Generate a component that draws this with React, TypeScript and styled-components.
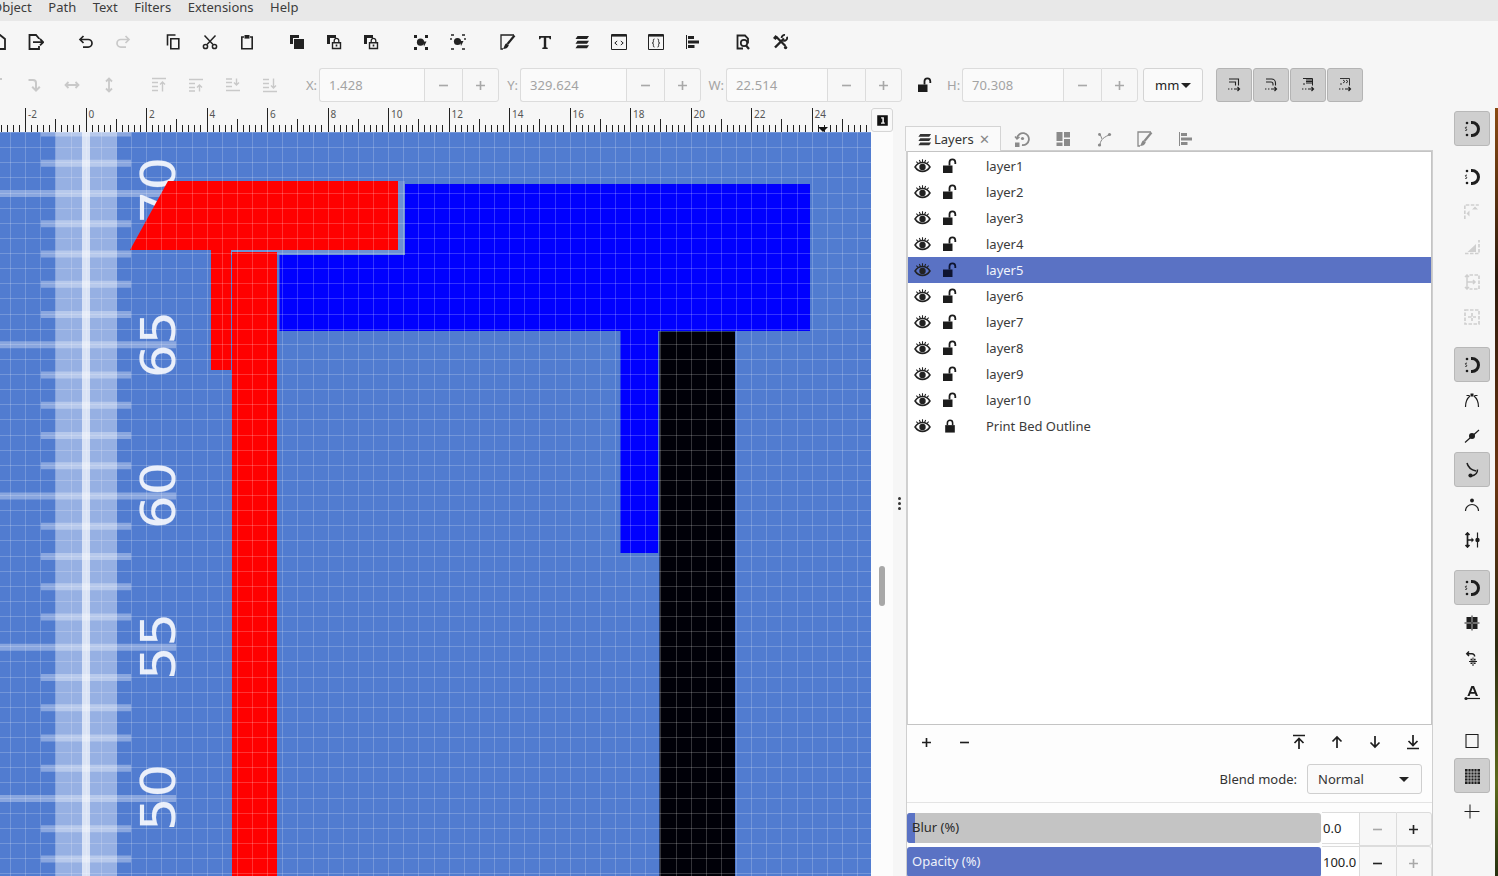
import React from "react";
import styled, { createGlobalStyle } from "styled-components";

const GlobalStyle = createGlobalStyle`
  html, body {
    margin: 0;
    padding: 0;
    background: #f6f6f6;
    overflow: hidden;
  }
  * {
    box-sizing: border-box;
  }
`;

const Page = styled.div`
  display: flex;
  flex-direction: column;
  width: 1498px;
  height: 876px;
  overflow: hidden;
  background: #f6f6f6;
  color: #3a3a3a;
  font-family: "Noto Sans", "Open Sans", sans-serif;
  font-size: 13px;
`;

const MenuBar = styled.div`
  display: flex;
  flex: none;
  gap: 16.5px;
  height: 21px;
  margin-left: -8px;
  background: #e8e8e8;
  line-height: 15px;
`;

const MenuItem = styled.span`
  color: #3c3c3c;
`;

const CommandBar = styled.div`
  display: flex;
  flex: none;
  align-items: center;
  gap: 13px;
  height: 43px;
  margin-left: -20px;
  padding-bottom: 1px;
`;

const ControlsBar = styled.div`
  display: flex;
  flex: none;
  align-items: flex-start;
  height: 44px;
  margin-left: -21px;
  padding-top: 4px;
`;

const ToolGroup = styled.div`
  display: flex;
  align-items: center;
  height: 34px;
  margin-right: ${(p: { $gap?: number }) => p.$gap ?? 13}px;
`;

const CmdGroup = styled.div`
  display: flex;
  align-items: center;
`;

const ToolBtn = styled.div<{ $muted?: boolean }>`
  display: flex;
  flex: none;
  align-items: center;
  justify-content: center;
  width: 37px;
  height: 34px;
  color: ${(p) => (p.$muted ? "#c9c9c9" : "#222")};
`;

const Svg = styled.svg<{ $size?: number }>`
  display: block;
  flex: none;
  width: ${(p) => p.$size ?? 16}px;
  height: ${(p) => p.$size ?? 16}px;
`;

const Field = styled.div`
  display: flex;
  flex: none;
  align-items: center;
  height: 34px;
`;

const FieldLabel = styled.span<{ $w: number }>`
  width: ${(p) => p.$w}px;
  padding-right: 2px;
  color: #a4a4a4;
  text-align: right;
`;

const ValueBox = styled.div<{ $w: number }>`
  display: flex;
  align-items: center;
  width: ${(p) => p.$w}px;
  height: 34px;
  padding: 0 0 1px 9px;
  background: #fafafa;
  border: 1px solid #dcdcdc;
  border-right: 0;
  border-radius: 3px 0 0 3px;
  color: #a3a3a3;
  letter-spacing: 0.1px;
`;

const StepBtn = styled.div<{ $last?: boolean; $muted?: boolean; $w?: number }>`
  display: flex;
  align-items: center;
  justify-content: center;
  width: ${(p) => p.$w ?? 38}px;
  height: 34px;
  background: #f7f7f7;
  border: 1px solid #dcdcdc;
  border-radius: ${(p) => (p.$last ? "0 3px 3px 0" : "0")};
  border-right-width: ${(p) => (p.$last ? 1 : 0)}px;
  color: ${(p) => (p.$muted ? "#a8a8a8" : "#222")};
`;

const LockSlot = styled.div`
  display: flex;
  flex: none;
  align-items: center;
  justify-content: center;
  width: 45px;
  height: 34px;
  color: #1c1c1c;
`;

const UnitSelect = styled.div`
  display: flex;
  flex: none;
  align-items: center;
  justify-content: space-between;
  width: 60px;
  height: 34px;
  margin-left: 5px;
  margin-right: 13px;
  padding: 0 11px;
  background: #fafafa;
  border: 1px solid #d4d4d4;
  border-radius: 3px;
  color: #222;
`;

const Caret = styled.span`
  width: 0;
  height: 0;
  border-left: 5px solid transparent;
  border-right: 5px solid transparent;
  border-top: 5px solid #222;
`;

const ToggleBtn = styled.div`
  display: flex;
  flex: none;
  align-items: center;
  justify-content: center;
  width: 36px;
  height: 34px;
  margin-right: 1px;
  background: #cfcfcf;
  border: 1px solid #b4b4b4;
  border-radius: 3px;
  color: #222;
`;

const Main = styled.div`
  display: flex;
  flex: 1;
  min-height: 0;
`;

const CanvasColumn = styled.div`
  display: flex;
  flex: none;
  flex-direction: column;
  width: 871px;
`;

const RulerSvg = styled.svg`
  display: block;
  flex: none;
  width: 871px;
  height: 24px;
  font-family: "Noto Sans", sans-serif;
  font-size: 10px;
`;

const CanvasSvg = styled.svg`
  display: block;
  width: 871px;
  height: 744px;
  background: #517cd0;
`;

const Gutter = styled.div`
  display: flex;
  flex: none;
  flex-direction: column;
  width: 22px;
  background: #fcfcfc;
`;

const CornerBtn = styled.div`
  display: flex;
  flex: none;
  align-items: center;
  justify-content: center;
  height: 24px;
  background: #f8f8f8;
  border: 1px solid #d6d6d6;
  border-radius: 3px;
  color: #111;
`;

const ScrollThumb = styled.div`
  flex: none;
  width: 6px;
  height: 40px;
  margin: 434px 0 0 8px;
  background: #a8a8a8;
  border-radius: 3px;
`;

const Handle = styled.div`
  display: flex;
  flex: none;
  flex-direction: column;
  align-items: center;
  justify-content: center;
  gap: 2px;
  width: 12px;
  padding-top: 22px;
`;

const HandleDot = styled.span`
  width: 3px;
  height: 3px;
  background: #333;
  border-radius: 50%;
`;

const Dock = styled.div`
  display: flex;
  flex: none;
  flex-direction: column;
  width: 528px;
  padding-top: 18px;
`;

const TabStrip = styled.div`
  display: flex;
  flex: none;
  height: 25px;
  margin-bottom: -1px;
`;

const ActiveTab = styled.div`
  position: relative;
  z-index: 1;
  display: flex;
  align-items: center;
  gap: 2px;
  width: 96px;
  padding-left: 11px;
  background: #fafafa;
  border: 1px solid #d4d4d4;
  border-bottom: 0;
  color: #333;
`;

const TabClose = styled.span`
  margin-left: 3px;
  color: #888;
`;

const Tab = styled.div`
  display: flex;
  flex: none;
  align-items: center;
  justify-content: center;
  width: 41px;
  color: #8a8a8a;
`;

const DockBody = styled.div`
  display: flex;
  flex: 1;
  flex-direction: column;
  min-height: 0;
  margin-left: 1px;
  background: #fdfdfd;
  border-left: 1px solid #cfcfcf;
  border-top: 1px solid #cfcfcf;
  border-right: 1px solid #cfcfcf;
`;

const LayerList = styled.div`
  flex: none;
  height: 574px;
  padding-top: 1px;
  background: #fff;
  border: 1px solid #c4c4c4;
  border-left-color: #d0d0d0;
`;

const LayerRow = styled.div<{ $selected?: boolean }>`
  display: flex;
  align-items: center;
  height: 26px;
  background: ${(p) => (p.$selected ? "#5a72c4" : "transparent")};
  color: ${(p) => (p.$selected ? "#f2f4fb" : "#3b3b3b")};
`;

const EyeSlot = styled.div`
  display: flex;
  justify-content: center;
  width: 28px;
  color: #222;
`;

const RowLock = styled.div<{ $selected?: boolean }>`
  display: flex;
  justify-content: center;
  width: 28px;
  color: ${(p) => (p.$selected ? "#0e1430" : "#1c1c1c")};
`;

const LayerName = styled.span`
  margin-left: 22px;
`;

const ActionRow = styled.div`
  display: flex;
  flex: none;
  justify-content: space-between;
  height: 34px;
`;

const ActionGroup = styled.div`
  display: flex;
`;

const ActionBtn = styled.div`
  display: flex;
  align-items: center;
  justify-content: center;
  width: 38px;
  height: 34px;
  color: #1e1e1e;
`;

const BlendRow = styled.div`
  display: flex;
  flex: none;
  align-items: center;
  justify-content: flex-end;
  gap: 10px;
  height: 30px;
  margin-top: 5px;
  padding-right: 10px;
  color: #333;
`;

const BlendSelect = styled.div`
  display: flex;
  align-items: center;
  justify-content: space-between;
  width: 115px;
  height: 30px;
  padding: 0 12px 0 10px;
  background: #fafafa;
  border: 1px solid #cfcfcf;
  border-radius: 3px;
  color: #333;
`;

const Separator = styled.div`
  flex: none;
  height: 1px;
  margin-top: 8px;
  background: #e4e4e4;
`;

const SliderRow = styled.div<{ $top: number }>`
  display: flex;
  flex: none;
  height: 32px;
  margin-top: ${(p) => p.$top}px;
`;

const SliderBar = styled.div`
  position: relative;
  flex: none;
  width: 414px;
  height: 30px;
  margin-top: 1px;
  overflow: hidden;
  background: #c4c4c4;
  border-radius: 3px;
`;

const SliderFill = styled.div<{ $pct: number }>`
  width: ${(p) => p.$pct}%;
  height: 100%;
  background: #5a72c4;
`;

const SliderLabel = styled.span<{ $light?: boolean }>`
  position: absolute;
  top: 5px;
  left: 5px;
  color: ${(p) => (p.$light ? "#eef1fa" : "#2a2a2a")};
`;

const SpinValue = styled.div`
  display: flex;
  flex: none;
  align-items: center;
  width: 37px;
  height: 32px;
  margin-left: 1px;
  padding: 0 0 1px 1px;
  background: #fff;
  border: 1px solid #dcdcdc;
  border-left: 0;
  border-right: 0;
  color: #222;
`;

const SnapBar = styled.div`
  display: flex;
  flex: none;
  flex-direction: column;
  gap: 13px;
  width: 62px;
  padding: 3px 0 0 21px;
`;

const SnapGroup = styled.div`
  display: flex;
  flex-direction: column;
`;

const SnapBtn = styled.div<{ $active?: boolean; $muted?: boolean }>`
  display: flex;
  align-items: center;
  justify-content: center;
  width: 36px;
  height: 35px;
  background: ${(p) => (p.$active ? "#cfcfcf" : "transparent")};
  border: 1px solid ${(p) => (p.$active ? "#b8b8b8" : "transparent")};
  border-radius: 3px;
  color: ${(p) => (p.$muted ? "#cfcfcf" : "#1e1e1e")};
`;

const Wallpaper = styled.div`
  flex: none;
  width: 3px;
  background: linear-gradient(180deg, #8a4a12 0%, #2c1a0c 22%, #6b3410 48%, #2d2a10 70%, #5d6a1c 88%, #26300f 100%);
`;

const F = ({ d }: { d: string }) => <path d={d} fill="currentColor" stroke="none" />;
const Dot = ({ x, y, r = 1.3 }: { x: number; y: number; r?: number }) => (
  <circle cx={x} cy={y} r={r} fill="currentColor" stroke="none" />
);

const stackBack = <F d="M1 1h9v3H4v6H1z" />;
const padlock = (
  <>
    <path d="M8.2 8V6.6a2.3 2.3 0 0 1 4.6 0V8" strokeWidth={1.3} />
    <path d="M6.5 8.7h8v5.8h-8z" strokeWidth={1.4} />
    <F d="M9.7 10.5h1.6v2H9.7z" />
  </>
);
const dashedArrow = <path d="M2 12h1.4M5 12h1.4M8 12h5.5M11.5 10l2 2-2 2" strokeWidth={1.2} />;

const icons: Record<string, React.ReactNode> = {
  magnet: (
    <>
      <path d="M7 1.5h1a6.5 6.5 0 0 1 0 13H7" strokeWidth={3} />
      <Dot x={3} y={2} />
      <Dot x={3} y={14} />
      <path d="M3 6.2c-1.7-.6-2.3 1-.9 1.6s.8 2.2-.9 1.6" strokeWidth={0.9} />
    </>
  ),
  open: <path d="M2 15V1h7l5 4v10z" strokeWidth={1.8} />,
  saveAs: (
    <>
      <path d="M11 5V4.5L8 1H1.5v14H11v-3" strokeWidth={1.8} />
      <path d="M5 8.2h10M12 5l3.2 3.2L12 11.4" strokeWidth={1.8} />
    </>
  ),
  undo: <path d="M5.5 2 2 5.5 5.5 9M2.5 5.5h7.7a3.8 3.8 0 0 1 0 7.6H5" strokeWidth={1.7} />,
  redo: <path d="M10.5 2 14 5.5 10.5 9M13.5 5.5H5.8a3.8 3.8 0 0 0 0 7.6H11" strokeWidth={1.7} />,
  copy: <path d="M5.8 4.8h8v10h-8zM2.5 11.5V1h8" strokeWidth={1.6} />,
  cut: (
    <>
      <path d="M5 10.5 13.5 1.5M11 10.5 2.5 1.5" strokeWidth={1.5} />
      <circle cx={3.5} cy={12.5} r={2.1} strokeWidth={1.5} />
      <circle cx={12.5} cy={12.5} r={2.1} strokeWidth={1.5} />
    </>
  ),
  paste: (
    <>
      <path d="M5 3H2.8v11.8h10.4V3H11" strokeWidth={1.6} />
      <F d="M5.5 1h5v3.6h-5z" />
    </>
  ),
  stack: (
    <>
      {stackBack}
      <F d="M5 5h10v10H5z" />
    </>
  ),
  stackLock: (
    <>
      {stackBack}
      {padlock}
    </>
  ),
  group: (
    <>
      <F d="M1 1h3v3H1zM12 1h3v3h-3zM1 13h3v3H1zM12 13h3v3h-3z" />
      <circle cx={7.5} cy={8.2} r={3.6} fill="currentColor" stroke="none" />
      <F d="M10 7.5h3.5L11 12.5z" />
    </>
  ),
  ungroup: (
    <>
      <path d="M1 1h3M12 1h3M1 15h3M12 15h3M1 4v2M15 4v2" strokeWidth={1.4} />
      <circle cx={7.5} cy={7.5} r={3.6} fill="currentColor" stroke="none" />
      <F d="M10 7h3.5L11 12z" />
    </>
  ),
  fillStroke: (
    <>
      <path d="M14 1H1v14h2" strokeWidth={1.3} />
      <path d="M14.5 1.5 7.5 10" strokeWidth={2.2} />
      <F d="M6.3 9.2c-1.8 1-1.8 3.6-3.3 5.8 2.6 0 5-1 5.8-3.8z" />
    </>
  ),
  text: <F d="M2 2h12v3.2h-1.2L12 3.8H9.2v9.4l1.5.5V15H5.3v-1.3l1.5-.5V3.8H4l-.8 1.4H2z" />,
  layers: <F d="M3.5 2H15l-2 3H1.5zM3.5 6.7H15l-2 3H1.5zM3.5 11.2H15l-2 3H1.5z" />,
  xml: (
    <>
      <path d="M.5 .5h15v15H.5z" strokeWidth={1} />
      <F d="M1 1h14v1.6H1z" />
      <path d="M6.2 7 3.8 9l2.4 2M9.8 7l2.4 2-2.4 2" strokeWidth={1} />
    </>
  ),
  css: (
    <>
      <path d="M.5 .5h15v15H.5z" strokeWidth={1} />
      <F d="M1 1h14v1.6H1z" />
      <path d="M6.5 5C5 5 5.4 6.2 5.4 7.4S5 9 4.2 9c.8 0 1.2.4 1.2 1.6S5 13 6.5 13M9.5 5c1.5 0 1.1 1.2 1.1 2.4S11 9 11.8 9c-.8 0-1.2.4-1.2 1.6s.4 2.4-1.1 2.4" strokeWidth={1} />
    </>
  ),
  align: (
    <>
      <path d="M1.5 1v14" strokeWidth={1} />
      <F d="M3 2h6v3H3zM3 6.5h11v3H3zM3 11h6.5v3H3z" />
    </>
  ),
  docProps: (
    <>
      <path d="M8 14.5H2.5V1.5H10l3 3v5" strokeWidth={1.8} />
      <circle cx={9} cy={9} r={3.2} strokeWidth={1.7} />
      <path d="M11 11.5 14 15" strokeWidth={2.2} />
    </>
  ),
  prefs: (
    <>
      <path d="M4 2.5 13.5 12" strokeWidth={2.2} />
      <F d="M1 4 3.5 1 6 3.5 3.5 6z" />
      <path d="M12 4.5 3 13.5" strokeWidth={2.4} />
      <path d="M15 2.8a3 3 0 0 1-3.8 3.8M9.6 4a3 3 0 0 1 3.4-3" strokeWidth={1.8} />
      <circle cx={13.6} cy={13.6} r={1.7} fill="currentColor" stroke="none" />
    </>
  ),
  rotCcw: <path d="M10 2H12" strokeWidth={2} />,
  rotCw: <path d="M1.5 3H6c2 0 3 1 3 3v7.5M5.2 9.8 9 13.6l3.8-3.8" strokeWidth={2} />,
  flipH: <path d="M1.5 8h13M4.5 5l-3 3 3 3M11.5 5l3 3-3 3" strokeWidth={1.8} />,
  flipV: <path d="M8 1.5v13M5 4.5l3-3 3 3M5 11.5l3 3 3-3" strokeWidth={1.8} />,
  raiseTop: <path d="M1 1.5h14M1 5.5h6M1 9.5h6M1 13.5h6M11.5 14.5V5M9 7.5 11.5 5 14 7.5" strokeWidth={1.4} />,
  raise: <path d="M1 2.5h14M1 6.5h6M1 10.5h6M1 14h6M11.5 14.5V8M9 10.5 11.5 8l2.5 2.5" strokeWidth={1.4} />,
  lower: <path d="M1 13.5h14M1 9.5h6M1 5.5h6M1 2h6M11.5 1.5V8M9 5.5 11.5 8 14 5.5" strokeWidth={1.4} />,
  lowerBottom: <path d="M1 14.5h14M1 10.5h6M1 6.5h6M1 2.5h6M11.5 1.5V11M9 8.5 11.5 11 14 8.5" strokeWidth={1.4} />,
  minus: <path d="M2.5 8h11" strokeWidth={2} />,
  plus: <path d="M2.5 8h11M8 2.5v11" strokeWidth={2} />,
  lockOpen: (
    <>
      <F d="M1 7.5h9.5V15H1z" />
      <path d="M7.5 7.5V4.2a2.9 2.9 0 0 1 5.8 0V6" strokeWidth={1.8} />
    </>
  ),
  lockClosed: (
    <>
      <F d="M2.5 7h11v8.5h-11z" />
      <path d="M5 7V4.5a3 3 0 0 1 6 0V7" strokeWidth={1.8} />
    </>
  ),
  eye: (
    <>
      <path d="M1 8.5c3.4-5.6 10.6-5.6 14 0-3.4 5.4-10.6 5.4-14 0z" strokeWidth={1.5} />
      <circle cx={8} cy={8.5} r={3} fill="currentColor" stroke="none" />
      <path d="M2.2 3.5 3.8 5M5 1.8 6 4M8 1.2v2.5M11 1.8 10 4M13.8 3.5 12.2 5" strokeWidth={1} />
    </>
  ),
  toggleA: (
    <>
      <path d="M3 2h9.5v6.5M3 5h6.5v3.5" strokeWidth={1.1} />
      {dashedArrow}
    </>
  ),
  toggleB: (
    <>
      <path d="M3 2h5.5a4 4 0 0 1 4 4v2.5M3 5h5a2 2 0 0 1 2 2v1.5" strokeWidth={1.1} />
      {dashedArrow}
    </>
  ),
  toggleC: (
    <>
      <path d="M3 1.5h9.5v7M6 3h6M6 4.5h6M6 6h6M3 7h2" strokeWidth={1} />
      {dashedArrow}
    </>
  ),
  toggleD: (
    <>
      <path d="M3 1.5h9.5v7M6 3l2 1.5L6 6M9 3l2 1.5L9 6M3 7h2" strokeWidth={0.9} />
      {dashedArrow}
    </>
  ),
  one: <F d="M1.5 1.5h13v13h-13zM6.3 4v1.6h1.5v4.9H6.2V12h4.6v-1.5H9.7V4z" />,
  history: (
    <>
      <path d="M3 7a6 6 0 1 1 5 7" strokeWidth={1.8} />
      <path d="M1 5.5 3 8l2.5-2" strokeWidth={1.4} />
      <Dot x={8.5} y={7.5} r={1.6} />
      <F d="M1 11.5h4.5V16H1z" />
    </>
  ),
  objects: <F d="M1.5 1h6v9h-6zM9 1h6v5.5H9zM1.5 11.5h6V15h-6zM9 8h6v7H9z" />,
  nodes: (
    <>
      <path d="M4 15c0-5 2-8 9-11M6 8 4 3" strokeWidth={1} />
      <Dot x={3.5} y={14} r={1.6} />
      <Dot x={13.5} y={3.5} r={1.6} />
      <Dot x={3.5} y={3.5} r={1.4} />
    </>
  ),
  snapBBox: (
    <>
      <path d="M.8 15V1h14" strokeWidth={1.7} strokeDasharray="3.5 1.5" />
      <F d="M8 5.5l3-3 3 3zM5.5 6.5v6L2.5 9.5z" />
    </>
  ),
  snapEdge: (
    <>
      <path d="M1 14.5h14V1" strokeWidth={1.7} strokeDasharray="3.5 1.5" />
      <F d="M3.5 13 12 5v8z" />
    </>
  ),
  snapMid: (
    <>
      <path d="M5.5 1h9.5v14H5.5" strokeWidth={1.7} strokeDasharray="3.5 1.5" />
      <path d="M3 1v14M1 3l2-2 2 2M1 13l2 2 2-2M3 8h8M9 6l2 2-2 2" strokeWidth={1.5} />
    </>
  ),
  snapCenter: <path d="M1 1h14v14H1zM8 4v8M4 8h8" strokeWidth={1.7} strokeDasharray="3.5 1.5" />,
  snapCusp: (
    <>
      <path d="M1.5 15c0-5 2-9 4.5-11M14.5 15c0-5-2-9-4.5-11M2.5 3.5h3M10.5 3.5h3" strokeWidth={1.2} />
      <F d="M6.5 1.5h3v3h-3z" />
    </>
  ),
  snapPath: (
    <>
      <path d="M1 15.5 15 3" strokeWidth={1.2} />
      <circle cx={8} cy={9} r={3} fill="currentColor" stroke="none" />
    </>
  ),
  snapIntersect: (
    <>
      <path d="M3 1c1 4 4.5 7 9 8" strokeWidth={1.5} />
      <path d="M13.5 7.5c0 3.5-2.5 6-6.5 6.5" strokeWidth={1.5} />
      <circle cx={6.5} cy={13.5} r={2.1} fill="currentColor" stroke="none" />
    </>
  ),
  snapSmooth: (
    <>
      <path d="M1.5 14a6.5 6.5 0 0 1 13 0" strokeWidth={1.2} />
      <Dot x={8} y={3.5} r={1.9} />
    </>
  ),
  snapMidpoint: (
    <>
      <path d="M3.5 1v14M1.5 3l2-2 2 2M1.5 13l2 2 2-2M4 8h5" strokeWidth={1.7} />
      <F d="M7.5 5.5 10 8l-2.5 2.5z" />
      <path d="M13.5 .5v15" strokeWidth={1.2} />
      <Dot x={13.5} y={8} r={2.2} />
    </>
  ),
  snapOthers: (
    <>
      <F d="M2.5 2h4.8v5.3H2.5zM8.7 2h4.8v5.3H8.7zM2.5 8.7h4.8V14H2.5zM8.7 8.7h4.8V14H8.7z" />
      <path d="M8 .5v15M.5 8h15" strokeWidth={1} />
    </>
  ),
  snapRotation: (
    <>
      <path d="M3 3.8h5a2.6 2.6 0 0 1 2.6 2.6M5 1.5 2.8 3.8 5 6" strokeWidth={1.5} />
      <path d="M9 7.5V16M5 11.5h8" strokeWidth={1} />
      <F d="M6.5 8.8h1.6v1.6H6.5zM10 8.8h1.6v1.6H10zM6.5 12.5h1.6v1.6H6.5zM10 12.5h1.6v1.6H10z" />
    </>
  ),
  snapText: (
    <>
      <F d="M7.4 1h2.6l4 10h-2.2l-.8-2.2H6.4L5.6 11H3.4zM7.1 7h3.2L8.7 3z" />
      <path d="M2 13.5h14" strokeWidth={1.2} />
      <Dot x={2} y={13.5} r={1.6} />
    </>
  ),
  page: <path d="M2 1.5h12v13H2z" strokeWidth={1.1} />,
  grid: (
    <>
      <F d="M1 1h15v15H1z" />
      <path d="M4 1v15M7 1v15M10 1v15M13 1v15M1 4h15M1 7h15M1 10h15M1 13h15" stroke="#cfcfcf" strokeWidth={0.8} />
    </>
  ),
  guide: <path d="M.5 8.5h15M6 1.5v14" strokeWidth={1} />,
  moveTop: <path d="M2 1.5h12M8 15V5M3.5 9 8 4.5 12.5 9" strokeWidth={1.7} />,
  moveUp: <path d="M8 14V3M3.5 7.5 8 3l4.5 4.5" strokeWidth={1.7} />,
  moveDown: <path d="M8 2v11M3.5 8.5 8 13l4.5-4.5" strokeWidth={1.7} />,
  moveBottom: <path d="M2 14.5h12M8 1v10M3.5 7 8 11.5 12.5 7" strokeWidth={1.7} />,
};

function Glyph({ name, size }: { name: string; size?: number }) {
  return (
    <Svg $size={size} viewBox="0 0 16 16" fill="none" stroke="currentColor">
      {icons[name]}
    </Svg>
  );
}

const commandGroups = [
  ["open", "saveAs"],
  ["undo", "redo"],
  ["copy", "cut", "paste"],
  ["stack", "stackLock", "stackLock"],
  ["group", "ungroup"],
  ["fillStroke", "text", "layers", "xml", "css", "align"],
  ["docProps", "prefs"],
];

const layerNames = ["layer1", "layer2", "layer3", "layer4", "layer5", "layer6", "layer7", "layer8", "layer9", "layer10"];

const snapGroups: { name: string; active?: boolean; muted?: boolean }[][] = [
  [{ name: "magnet", active: true }],
  [
    { name: "magnet" },
    { name: "snapBBox", muted: true },
    { name: "snapEdge", muted: true },
    { name: "snapMid", muted: true },
    { name: "snapCenter", muted: true },
  ],
  [
    { name: "magnet", active: true },
    { name: "snapCusp" },
    { name: "snapPath" },
    { name: "snapIntersect", active: true },
    { name: "snapSmooth" },
    { name: "snapMidpoint" },
  ],
  [
    { name: "magnet", active: true },
    { name: "snapOthers" },
    { name: "snapRotation" },
    { name: "snapText" },
  ],
  [{ name: "page" }, { name: "grid", active: true }, { name: "guide" }],
];

function SpinField({ label, value, labelW, boxW }: { label: string; value: string; labelW: number; boxW: number }) {
  return (
    <Field>
      <FieldLabel $w={labelW}>{label}</FieldLabel>
      <ValueBox $w={boxW}>{value}</ValueBox>
      <StepBtn $muted>
        <Glyph name="minus" size={13} />
      </StepBtn>
      <StepBtn $last $muted $w={37}>
        <Glyph name="plus" size={13} />
      </StepBtn>
    </Field>
  );
}

function Ruler() {
  const ticks = [];
  for (let i = -15; i <= 130; i++) {
    const x = Math.round(85.5 + i * 6.05) + 0.5;
    const top = i % 10 === 0 ? 0 : i % 5 === 0 ? 11 : 17;
    ticks.push(<line key={i} x1={x} x2={x} y1={top} y2={24} stroke="#222" strokeWidth={1} />);
  }
  const labels = [];
  for (let n = -2; n <= 24; n += 2) {
    labels.push(
      <text key={n} x={85.5 + n * 30.25 + 3} y={10} fill="#555">
        {n}
      </text>
    );
  }
  return (
    <RulerSvg viewBox="0 0 871 24">
      {ticks}
      {labels}
      <path d="M818 19h10l-5 5z" fill="#111" />
    </RulerSvg>
  );
}

function Drawing() {
  // canvas origin is at y=132 on the page
  const y0 = 132;
  const grid = [];
  for (let i = 0; i < 60; i++) {
    const x = Math.round(10 + i * 15.125) + 0.5;
    grid.push(<line key={"v" + i} x1={x} x2={x} y1={0} y2={744} />);
  }
  for (let i = 0; i < 50; i++) {
    const y = Math.round(i * 15.125) + 0.5;
    grid.push(<line key={"h" + i} x1={0} x2={871} y1={y} y2={y} />);
  }
  const bedTicks = [];
  for (let i = 0; i < 26; i++) {
    const y = 133 + i * 30.25 - y0;
    const long = (i - 2) % 5 === 0;
    bedTicks.push(<rect key={i} x={long ? 0 : 41} y={y - 3.5} width={long ? 176 : 90} height={7} fill="#fff" fillOpacity={0.32} />);
  }
  const numbers = [
    ["70", 224],
    ["65", 378],
    ["60", 529],
    ["55", 680],
    ["50", 831],
  ] as const;
  return (
    <CanvasSvg viewBox="0 0 871 744">
      <rect x={55.7} y={0} width={61} height={744} fill="#fff" fillOpacity={0.4} />
      {bedTicks}
      <rect x={82} y={0} width={8} height={744} fill="#fff" fillOpacity={0.65} />
      {numbers.map(([n, y]) => (
        <text
          key={n}
          transform={`translate(175 ${y - y0}) rotate(-90) scale(1.1 1)`}
          fill="#fff"
          fillOpacity={0.88}
          stroke="#fff"
          strokeOpacity={0.4}
          strokeWidth={0.3}
          fontFamily="DejaVu Sans"
          fontSize={48}
        >
          {n}
        </text>
      ))}
      <path d="M231 118h174v5H231z" fill="#6d90d4" />
      <path d="M398 49h7v74h-7z" fill="#6d90d4" />
      <path d="M405 52h405v147H279.5v-76H405z" fill="#0000ff" />
      <rect x={620.5} y={199} width={37.5} height={222} fill="#0000ff" />
      <rect x={659.5} y={199.5} width={75.5} height={545} fill="#000008" />
      <path d="M130 118 168 49h230v69H231v-1h-20v1z" fill="#ff0000" />
      <rect x={211} y={117} width={20} height={121} fill="#ff0000" />
      <rect x={232} y={120} width={45} height={624} fill="#ff0000" />
      <g stroke="#fff" strokeOpacity={0.2} strokeWidth={1} shapeRendering="crispEdges">
        {grid}
      </g>
    </CanvasSvg>
  );
}

export default function App() {
  return (
    <Page>
      <GlobalStyle />
      <MenuBar>
        {["Object", "Path", "Text", "Filters", "Extensions", "Help"].map((m) => (
          <MenuItem key={m}>{m}</MenuItem>
        ))}
      </MenuBar>
      <CommandBar>
        {commandGroups.map((group, i) => (
          <CmdGroup key={i}>
            {group.map((name, j) => (
              <ToolBtn key={j} $muted={name === "redo"}>
                <Glyph name={name} />
              </ToolBtn>
            ))}
          </CmdGroup>
        ))}
      </CommandBar>
      <ControlsBar>
        <ToolGroup>
          {["rotCcw", "rotCw", "flipH", "flipV"].map((name) => (
            <ToolBtn key={name} $muted>
              <Glyph name={name} />
            </ToolBtn>
          ))}
        </ToolGroup>
        <ToolGroup $gap={0}>
          {["raiseTop", "raise", "lower", "lowerBottom"].map((name) => (
            <ToolBtn key={name} $muted>
              <Glyph name={name} />
            </ToolBtn>
          ))}
        </ToolGroup>
        <SpinField label="X:" value="1.428" labelW={31} boxW={105} />
        <SpinField label="Y:" value="329.624" labelW={21} boxW={106} />
        <SpinField label="W:" value="22.514" labelW={25} boxW={101} />
        <LockSlot>
          <Glyph name="lockOpen" size={16} />
        </LockSlot>
        <SpinField label="H:" value="70.308" labelW={15} boxW={101} />
        <UnitSelect>
          mm
          <Caret />
        </UnitSelect>
        {["toggleA", "toggleB", "toggleC", "toggleD"].map((name) => (
          <ToggleBtn key={name}>
            <Glyph name={name} />
          </ToggleBtn>
        ))}
      </ControlsBar>
      <Main>
        <CanvasColumn>
          <Ruler />
          <Drawing />
        </CanvasColumn>
        <Gutter>
          <CornerBtn>
            <Glyph name="one" size={13} />
          </CornerBtn>
          <ScrollThumb />
        </Gutter>
        <Handle>
          <HandleDot />
          <HandleDot />
          <HandleDot />
        </Handle>
        <Dock>
          <TabStrip>
            <ActiveTab>
              <Glyph name="layers" size={15} />
              Layers
              <TabClose>✕</TabClose>
            </ActiveTab>
            {["history", "objects", "nodes", "fillStroke", "align"].map((name) => (
              <Tab key={name}>
                <Glyph name={name} />
              </Tab>
            ))}
          </TabStrip>
          <DockBody>
            <LayerList>
              {layerNames.map((name) => (
                <LayerRow key={name} $selected={name === "layer5"}>
                  <EyeSlot>
                    <Glyph name="eye" size={17} />
                  </EyeSlot>
                  <RowLock $selected={name === "layer5"}>
                    <Glyph name="lockOpen" size={16} />
                  </RowLock>
                  <LayerName>{name}</LayerName>
                </LayerRow>
              ))}
              <LayerRow>
                <EyeSlot>
                  <Glyph name="eye" size={17} />
                </EyeSlot>
                <RowLock>
                  <Glyph name="lockClosed" size={14} />
                </RowLock>
                <LayerName>Print Bed Outline</LayerName>
              </LayerRow>
            </LayerList>
            <ActionRow>
              <ActionGroup>
                <ActionBtn>
                  <Glyph name="plus" size={13} />
                </ActionBtn>
                <ActionBtn>
                  <Glyph name="minus" size={13} />
                </ActionBtn>
              </ActionGroup>
              <ActionGroup>
                {["moveTop", "moveUp", "moveDown", "moveBottom"].map((name) => (
                  <ActionBtn key={name}>
                    <Glyph name={name} />
                  </ActionBtn>
                ))}
              </ActionGroup>
            </ActionRow>
            <BlendRow>
              Blend mode:
              <BlendSelect>
                Normal
                <Caret />
              </BlendSelect>
            </BlendRow>
            <Separator />
            <SliderRow $top={9}>
              <SliderBar>
                <SliderFill $pct={2} />
                <SliderLabel>Blur (%)</SliderLabel>
              </SliderBar>
              <SpinValue>0.0</SpinValue>
              <StepBtn $muted $w={37}>
                <Glyph name="minus" size={13} />
              </StepBtn>
              <StepBtn $last $w={37}>
                <Glyph name="plus" size={13} />
              </StepBtn>
            </SliderRow>
            <SliderRow $top={2}>
              <SliderBar>
                <SliderFill $pct={100} />
                <SliderLabel $light>Opacity (%)</SliderLabel>
              </SliderBar>
              <SpinValue>100.0</SpinValue>
              <StepBtn $w={37}>
                <Glyph name="minus" size={13} />
              </StepBtn>
              <StepBtn $last $muted $w={37}>
                <Glyph name="plus" size={13} />
              </StepBtn>
            </SliderRow>
          </DockBody>
        </Dock>
        <SnapBar>
          {snapGroups.map((group, i) => (
            <SnapGroup key={i}>
              {group.map((item, j) => (
                <SnapBtn key={j} $active={item.active} $muted={item.muted}>
                  <Glyph name={item.name} />
                </SnapBtn>
              ))}
            </SnapGroup>
          ))}
        </SnapBar>
        <Wallpaper />
      </Main>
    </Page>
  );
}
